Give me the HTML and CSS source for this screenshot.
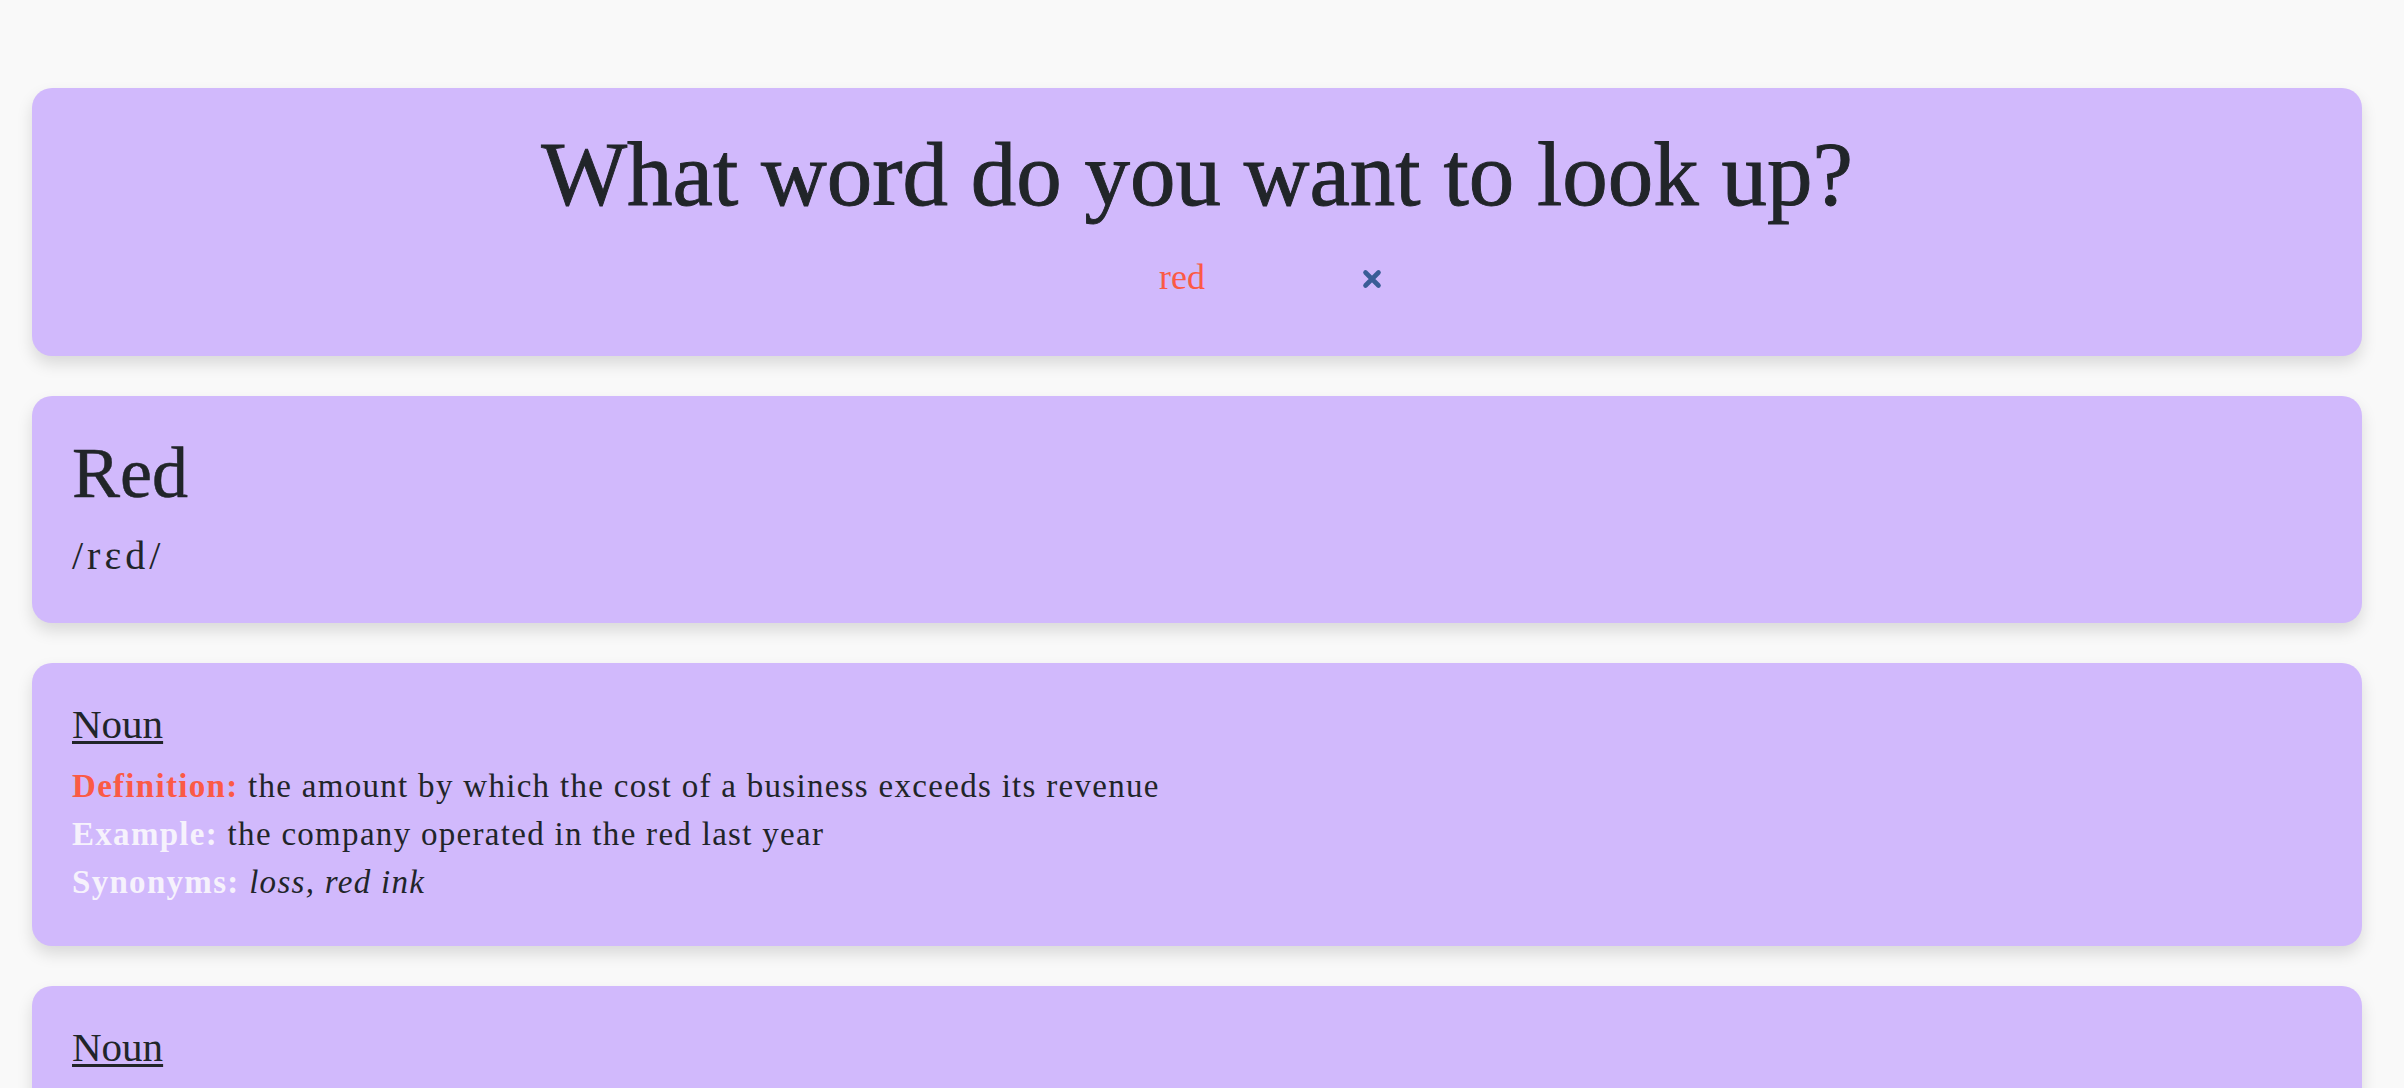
FILE: index.html
```html
<!DOCTYPE html>
<html lang="en">
<head>
<meta charset="utf-8">
<title>Dictionary</title>
<link rel="stylesheet" href="styles.css">
</head>
<body>
<main class="page">
  <section class="card search-card">
    <h1 class="title">What word do you want to look up?</h1>
    <div class="search-row">
      <input class="search-input" type="text" value="red" aria-label="word">
      <button class="clear-btn" aria-label="clear">
        <svg width="20" height="20" viewBox="0 0 20 20"><path d="M3.5 3.5 L16.5 16.5 M16.5 3.5 L3.5 16.5" stroke="#3a5d96" stroke-width="4.6" stroke-linecap="round"/></svg>
      </button>
    </div>
  </section>

  <section class="card word-card">
    <h2 class="word">Red</h2>
    <p class="phonetic">/rɛd/</p>
  </section>

  <section class="card meaning-card">
    <h3 class="pos">Noun</h3>
    <p class="line"><span class="label label-def">Definition:</span> the amount by which the cost of a business exceeds its revenue</p>
    <p class="line"><span class="label label-ex">Example:</span> the company operated in the red last year</p>
    <p class="line"><span class="label label-ex">Synonyms:</span> <em>loss, red ink</em></p>
  </section>

  <section class="card meaning-card">
    <h3 class="pos">Noun</h3>
  </section>
</main>
</body>
</html>
```

FILE: styles.css
```css
html, body {
  margin: 0;
  padding: 0;
}
body {
  background: #f9f9f9;
  color: #212529;
  font-family: "Liberation Serif", "Times New Roman", serif;
}
.page {
  padding: 88px 42px 40px 32px;
  display: flex;
  flex-direction: column;
  gap: 40px;
}
.card {
  background: #d1b9fc;
  border-radius: 20px;
  box-shadow: 0 8px 16px rgba(0, 0, 0, 0.13);
  padding: 0 40px;
}
.search-card {
  padding-top: 32px;
  padding-bottom: 55px;
  text-align: center;
}
.title {
  margin: 0;
  font-size: 91px;
  line-height: 110px;
  font-weight: 400;
  color: #212529;
  -webkit-text-stroke: 0.9px #212529;
}
.search-row {
  margin-top: 23px;
  height: 48px;
  display: flex;
  justify-content: center;
  align-items: center;
  gap: 10px;
}
.search-input {
  width: 340px;
  height: 48px;
  border: none;
  outline: none;
  background: transparent;
  text-align: center;
  font-family: "Liberation Serif", "Times New Roman", serif;
  font-size: 36px;
  line-height: 48px;
  color: #fb5a45;
  padding: 0;
}
.clear-btn {
  border: none;
  background: transparent;
  padding: 0;
  width: 20px;
  height: 20px;
  margin-top: 4px;
  display: flex;
  cursor: pointer;
}
.word-card {
  padding-top: 34px;
  padding-bottom: 43px;
}
.word {
  margin: 0;
  font-size: 72px;
  line-height: 86px;
  font-weight: 400;
  -webkit-text-stroke: 0.5px #212529;
}
.phonetic {
  margin: 16px 0 0;
  font-size: 40px;
  line-height: 48px;
  letter-spacing: 4px;
}
.meaning-card {
  padding-top: 37px;
  padding-bottom: 40px;
}
.pos {
  margin: 0 0 14px;
  font-size: 41px;
  line-height: 48px;
  font-weight: 400;
  text-decoration: underline;
  text-decoration-thickness: 3px;
  text-underline-offset: 3px;
}
.line {
  margin: 0;
  font-size: 33px;
  line-height: 48px;
  letter-spacing: 1.3px;
}
.label {
  font-weight: 700;
}
.label-def {
  color: #fb5a45;
}
.label-ex {
  color: #f6f2fc;
}
```
